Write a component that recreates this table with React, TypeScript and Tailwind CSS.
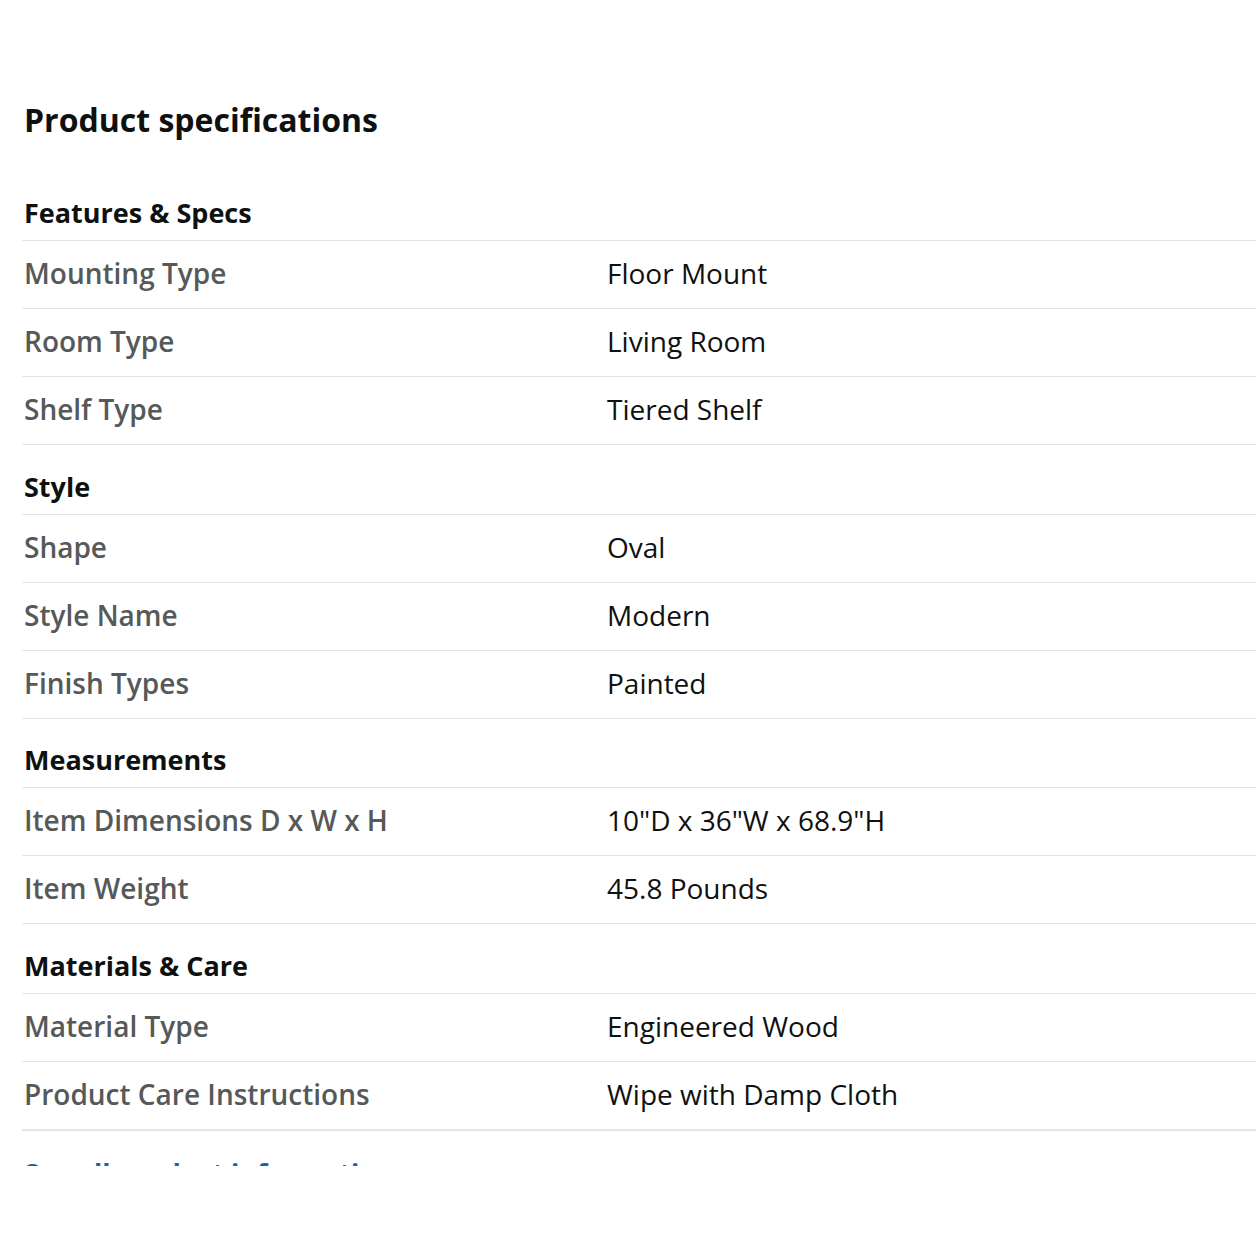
import React from "react";

type Row = { label: string; value: string };
type Section = { title: string; pad: string; rows: Row[] };

const sections: Section[] = [
  {
    title: "Features & Specs",
    pad: "h-[47px]",
    rows: [
      { label: "Mounting Type", value: "Floor Mount" },
      { label: "Room Type", value: "Living Room" },
      { label: "Shelf Type", value: "Tiered Shelf" },
    ],
  },
  {
    title: "Style",
    pad: "h-[70px] border-t border-[#e3e6e6] pt-[22px]",
    rows: [
      { label: "Shape", value: "Oval" },
      { label: "Style Name", value: "Modern" },
      { label: "Finish Types", value: "Painted" },
    ],
  },
  {
    title: "Measurements",
    pad: "h-[69px] border-t border-[#e3e6e6] pt-[21px]",
    rows: [
      { label: "Item Dimensions D x W x H", value: '10"D x 36"W x 68.9"H' },
      { label: "Item Weight", value: "45.8 Pounds" },
    ],
  },
  {
    title: "Materials & Care",
    pad: "h-[70px] border-t border-[#e3e6e6] pt-[22px]",
    rows: [
      { label: "Material Type", value: "Engineered Wood" },
      { label: "Product Care Instructions", value: "Wipe with Damp Cloth" },
    ],
  },
];

const SpecRow: React.FC<Row> = ({ label, value }) => (
  <div className="flex h-[68px] items-center border-t border-[#e3e6e6] pb-[4px] pl-[2px]">
    <div className="w-[583px] text-[28px] font-semibold text-[#565959]">{label}</div>
    <div className="text-[28px] text-[#0f1111]">{value}</div>
  </div>
);

export default function App() {
  return (
    <div
      className="h-[1166px] w-[1256px] overflow-hidden bg-white pl-[22px]"
      style={{ fontFamily: '"Open Sans", "Noto Sans", Arial, sans-serif' }}
    >
      <h1 className="mt-[100px] pl-[2px] text-[32px] font-bold leading-[40px] text-[#0f1111]">
        Product specifications
      </h1>
      <div className="mt-[53px]">
        {sections.map((s) => (
          <div key={s.title}>
            <div className={`${s.pad} pl-[2px]`}>
              <h2 className="text-[27px] font-bold leading-[40px] text-[#0f1111]">{s.title}</h2>
            </div>
            {s.rows.map((r) => (
              <SpecRow key={r.label} {...r} />
            ))}
          </div>
        ))}
        <div className="border-t-2 border-[#e3e6e6] pl-[2px] pt-[22px]">
          <a className="text-[27px] font-bold leading-[40px] text-[#2162a1]">
            See all product information
          </a>
        </div>
      </div>
    </div>
  );
}
